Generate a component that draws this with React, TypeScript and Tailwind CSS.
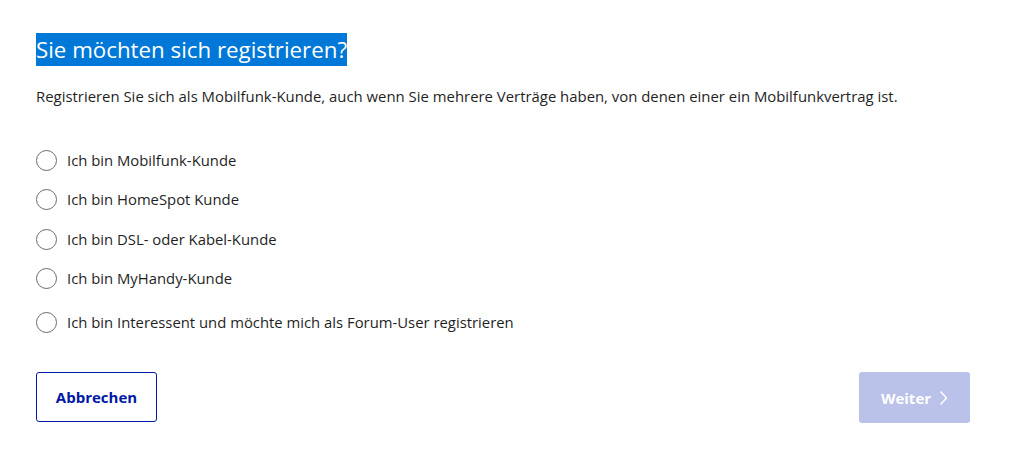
import React from "react";

const options = [
  "Ich bin Mobilfunk-Kunde",
  "Ich bin HomeSpot Kunde",
  "Ich bin DSL- oder Kabel-Kunde",
  "Ich bin MyHandy-Kunde",
];

function Radio({ label, className }: { label: string; className?: string }) {
  return (
    <label className={"flex items-center gap-[10px] h-[21px] " + (className ?? "")}>
      <span className="w-[21px] h-[21px] rounded-full border-[1.5px] border-[#6b6b6b] bg-white shrink-0" />
      <span className="text-[14.85px] leading-[21px] text-[#1f1f1f]">{label}</span>
    </label>
  );
}

export default function App() {
  return (
    <div
      className="w-[1009px] h-[451px] bg-white pl-[36px] pr-[39px] pt-[33px]"
      style={{ fontFamily: '"Open Sans", "Noto Sans", sans-serif' }}
    >
      <h1 className="inline-block bg-[#0078d7] text-white text-[22.3px] leading-[33px] font-normal">
        Sie möchten sich registrieren?
      </h1>
      <p className="mt-[20px] text-[14.9px] leading-[20px] text-[#1f1f1f]">
        Registrieren Sie sich als Mobilfunk-Kunde, auch wenn Sie mehrere Verträge haben, von denen einer ein Mobilfunkvertrag ist.
      </p>
      <div className="mt-[44px] flex flex-col gap-[18.33px]">
        {options.map((o) => (
          <Radio key={o} label={o} />
        ))}
        <Radio label="Ich bin Interessent und möchte mich als Forum-User registrieren" className="mt-[5px]" />
      </div>
      <div className="mt-[39px] flex justify-between items-start">
        <button className="w-[121px] h-[50px] rounded-[3px] border border-[#0019a5] text-[#0019a5] font-bold text-[15px] bg-white">
          Abbrechen
        </button>
        <button className="w-[111px] h-[51px] rounded-[3px] bg-[#bbc2ea] text-white font-bold text-[15px] flex items-center justify-center gap-[8px]">
          Weiter
          <svg width="9" height="16" viewBox="0 0 9 16" fill="none">
            <path d="M1.5 1.5 L7.5 8 L1.5 14.5" stroke="white" strokeWidth="1.4" />
          </svg>
        </button>
      </div>
    </div>
  );
}
